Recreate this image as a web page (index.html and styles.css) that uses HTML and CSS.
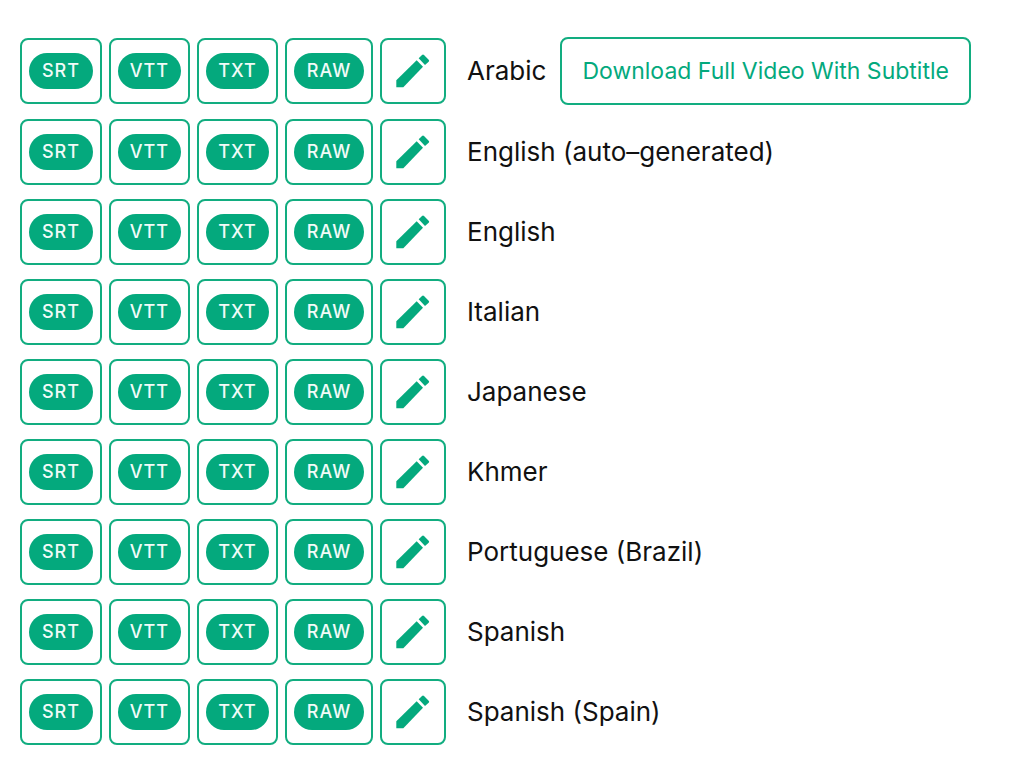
FILE: index.html
```html
<!DOCTYPE html>
<html lang="en">
<head>
<meta charset="utf-8">
<title>Subtitles</title>
<link rel="stylesheet" href="styles.css">
</head>
<body>
<svg class="defs" width="0" height="0" aria-hidden="true">
  <symbol id="pencil" viewBox="0 0 102 102">
    <path d="M1 100V79L62 19L81 38L22 100Z"/>
    <path d="M68 13L78 3Q81 0 84 3L98 17Q101 20 98 23L87 33Z"/>
  </symbol>
</svg>
<ul class="subtitle-list" id="subtitles"></ul>
<script src="main.js"></script>
</body>
</html>
```

FILE: styles.css
```css
* {
  box-sizing: border-box;
}

body {
  margin: 0;
  background: #fff;
  color: #111;
  font-family: Inter, "Noto Sans", sans-serif;
}

.defs {
  position: absolute;
}

.subtitle-list {
  display: flex;
  flex-direction: column;
  gap: 14px;
  margin: 0;
  padding: 37px 20px 30px;
  list-style: none;
}

.row {
  display: flex;
  align-items: center;
  gap: 14px;
}

.formats {
  display: grid;
  grid-template-columns: 82px 81px 81px 88px 66px;
  gap: 7px;
}

.btn {
  display: flex;
  align-items: center;
  justify-content: center;
  height: 66px;
  padding: 0 7px;
  border: 2px solid #12ad80;
  border-radius: 8px;
  background: #fff;
  color: #04a97d;
  font: inherit;
  cursor: pointer;
}

.pill {
  flex: 1;
  border-radius: 18px;
  background: #04a97d;
  color: #f2fbf8;
  font-size: 18px;
  font-weight: 500;
  line-height: 36px;
  letter-spacing: 1px;
  text-align: center;
}

.icon {
  width: 34px;
  height: 34px;
  fill: currentColor;
}

.language {
  padding-left: 7px;
  font-size: 26px;
  line-height: 36px;
}

.download {
  height: 68px;
  padding: 0 20px;
  font-size: 23px;
}
```

FILE: main.js
```js
const languages = [
  "Arabic",
  "English (auto–generated)",
  "English",
  "Italian",
  "Japanese",
  "Khmer",
  "Portuguese (Brazil)",
  "Spanish",
  "Spanish (Spain)"
];
const formats = ["SRT", "VTT", "TXT", "RAW"];

document.getElementById("subtitles").innerHTML = languages.map((name, i) => `
  <li class="row">
    <div class="formats">
      ${formats.map(f => `<button type="button" class="btn"><span class="pill">${f}</span></button>`).join("")}
      <button type="button" class="btn" aria-label="Edit ${name}"><svg class="icon" aria-hidden="true"><use href="#pencil"/></svg></button>
    </div>
    <span class="language">${name}</span>
    ${i === 0 ? '<button type="button" class="btn download">Download Full Video With Subtitle</button>' : ""}
  </li>`).join("");
```
